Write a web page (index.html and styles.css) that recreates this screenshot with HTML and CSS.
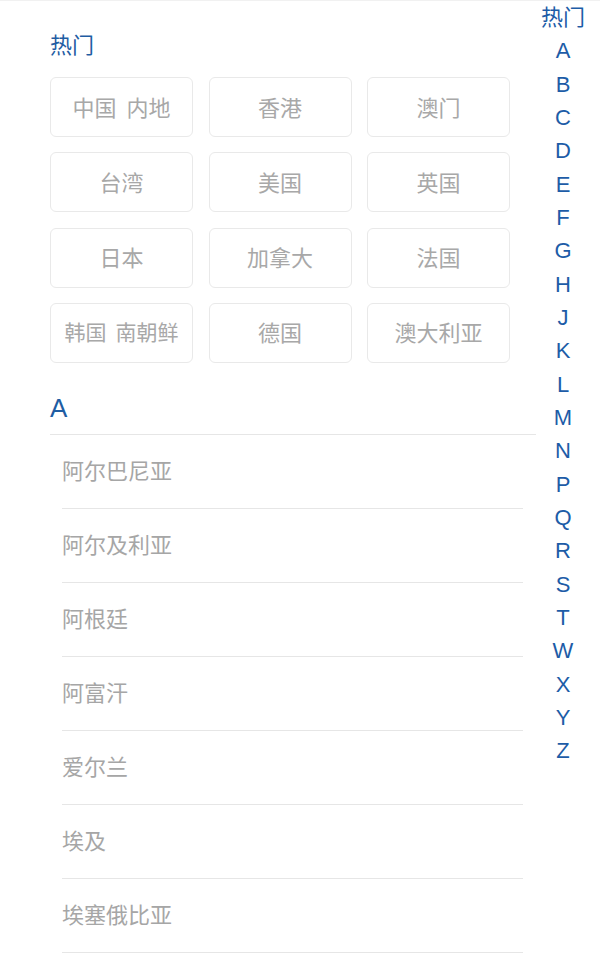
FILE: index.html
```html
<!DOCTYPE html>
<html lang="zh-CN">
<head>
<meta charset="utf-8">
<title>选择国家或地区</title>
<link rel="stylesheet" href="styles.css">
</head>
<body>
<div class="page">
  <main class="content">
    <h2 class="section-title hot-title">热门</h2>
    <div class="hot-grid">
      <div class="hot-item">中国 内地</div>
      <div class="hot-item">香港</div>
      <div class="hot-item">澳门</div>
      <div class="hot-item">台湾</div>
      <div class="hot-item">美国</div>
      <div class="hot-item">英国</div>
      <div class="hot-item">日本</div>
      <div class="hot-item">加拿大</div>
      <div class="hot-item">法国</div>
      <div class="hot-item hot-item-long">韩国 南朝鲜</div>
      <div class="hot-item">德国</div>
      <div class="hot-item">澳大利亚</div>
    </div>
    <h2 class="section-title letter-title">A</h2>
    <ul class="country-list">
      <li>阿尔巴尼亚</li>
      <li>阿尔及利亚</li>
      <li>阿根廷</li>
      <li>阿富汗</li>
      <li>爱尔兰</li>
      <li>埃及</li>
      <li>埃塞俄比亚</li>
    </ul>
  </main>
  <nav class="index-bar">
    <div class="index-item index-hot">热门</div>
    <div class="index-item">A</div>
    <div class="index-item">B</div>
    <div class="index-item">C</div>
    <div class="index-item">D</div>
    <div class="index-item">E</div>
    <div class="index-item">F</div>
    <div class="index-item">G</div>
    <div class="index-item">H</div>
    <div class="index-item">J</div>
    <div class="index-item">K</div>
    <div class="index-item">L</div>
    <div class="index-item">M</div>
    <div class="index-item">N</div>
    <div class="index-item">P</div>
    <div class="index-item">Q</div>
    <div class="index-item">R</div>
    <div class="index-item">S</div>
    <div class="index-item">T</div>
    <div class="index-item">W</div>
    <div class="index-item">X</div>
    <div class="index-item">Y</div>
    <div class="index-item">Z</div>
  </nav>
</div>
</body>
</html>
```

FILE: styles.css
```css
html, body {
  margin: 0;
  padding: 0;
  background: #ffffff;
}

body {
  font-family: "Liberation Sans", "Noto Sans CJK SC", sans-serif;
}

.page {
  display: flex;
  align-items: flex-start;
  border-top: 1px solid #f1f1f1;
}

.content {
  width: 486px;
  padding: 30px 0 0 50px;
}

.section-title {
  margin: 0;
  font-weight: normal;
  color: #1f5da3;
}

.hot-title {
  font-size: 22px;
  line-height: 30px;
  margin-bottom: 16px;
}

.hot-grid {
  display: grid;
  grid-template-columns: repeat(3, 143px);
  grid-auto-rows: 60px;
  column-gap: 15.5px;
  row-gap: 15.3px;
}

.hot-item {
  box-sizing: border-box;
  border: 1px solid #e9e9e9;
  border-radius: 6px;
  padding-bottom: 3px;
  display: flex;
  align-items: center;
  justify-content: center;
  font-size: 22px;
  color: #a8a8a8;
  word-spacing: 4px;
  white-space: nowrap;
}

.hot-item-long {
  font-size: 21px;
  word-spacing: 3px;
}

.letter-title {
  font-size: 26px;
  line-height: 40px;
  margin-top: 25px;
  padding-bottom: 6px;
  border-bottom: 1px solid #e6e6e6;
}

.country-list {
  list-style: none;
  margin: 0;
  padding: 0 13px 0 12px;
}

.country-list li {
  box-sizing: border-box;
  height: 74px;
  line-height: 73px;
  border-bottom: 1px solid #e6e6e6;
  font-size: 22px;
  color: #a6a6a6;
}

.index-bar {
  width: 44px;
  margin-left: 5px;
  text-align: center;
  color: #1d5ca7;
}

.index-item {
  font-size: 22px;
  line-height: 33.33px;
}
```
